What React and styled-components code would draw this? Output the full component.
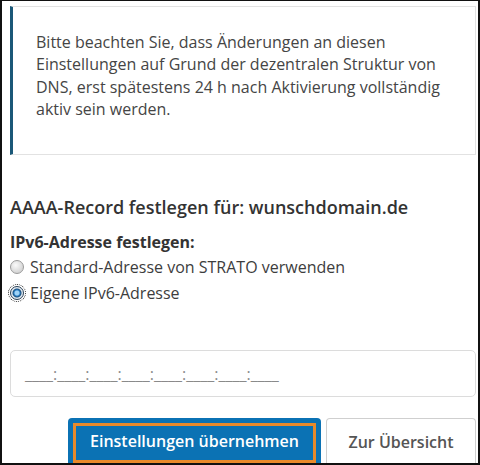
import { createGlobalStyle, styled } from "styled-components";

const GlobalStyle = createGlobalStyle`
  html, body {
    margin: 0;
    padding: 0;
    background: #fff;
  }
  body {
    font-family: "Open Sans", "Noto Sans", sans-serif;
    color: #3d3d3d;
  }
`;

const Frame = styled.div`
  box-sizing: border-box;
  width: 480px;
  height: 465px;
  border: 2px solid #111;
  border-top-width: 1px;
  padding: 5px 2px 0 8px;
  overflow: hidden;
  background: #fff;
`;

const Notice = styled.div`
  box-sizing: border-box;
  height: 149px;
  border: 1px solid #e2e2e2;
  border-left: 3px solid #1b5878;
  padding: 24px 20px 0 23px;
  font-size: 16px;
  line-height: 22.3px;
  color: #454545;
`;

const Section = styled.div`
  padding-top: 40px;
`;

const Heading = styled.h2`
  margin: 0;
  font-size: 18px;
  font-weight: 600;
  line-height: 24px;
  color: #333;
`;

const Label = styled.div`
  margin-top: 12px;
  font-size: 16px;
  font-weight: 700;
  line-height: 23px;
  color: #333;
`;

const RadioRow = styled.label`
  display: flex;
  align-items: center;
  gap: 6px;
  font-size: 16px;
  line-height: 26px;
  color: #3d3d3d;
`;

const RadioDot = styled.span`
  box-sizing: border-box;
  width: 14px;
  height: 14px;
  border-radius: 50%;
  border: 1px solid ${(p) => (p.$checked ? "#2a3f55" : "#9a9a9a")};
  background: ${(p) =>
    p.$checked
      ? "radial-gradient(circle at 50% 50%, #9fd3f7 0 2px, #2a7fc4 3px, #1b4f7d 4px, #dfe8f0 5px)"
      : "radial-gradient(circle at 40% 35%, #fafafa 0, #d6d6d6 70%)"};
  outline: ${(p) => (p.$checked ? "1px dotted #222" : "none")};
  outline-offset: 1px;
  flex-shrink: 0;
`;

const AddressField = styled.div`
  box-sizing: border-box;
  margin-top: 44px;
  height: 47px;
  border: 1px solid #dcdcdc;
  border-radius: 5px;
  padding: 12px 14px 0;
  font-size: 16px;
  color: #8a8a8a;
  white-space: nowrap;
`;

const Actions = styled.div`
  display: flex;
  justify-content: flex-end;
  gap: 5px;
  margin-top: 21px;
`;

const Button = styled.button`
  box-sizing: border-box;
  height: 50px;
  padding: 0 0 4px;
  font-family: "Open Sans", "Noto Sans", sans-serif;
  font-size: 16px;
  font-weight: 600;
  white-space: nowrap;
  border-radius: 4px 4px 0 0;
  cursor: pointer;
  ${(p) =>
    p.$primary
      ? `
    width: 253px;
    background: #0b72b4;
    color: #fff;
    border: none;
    outline: 3px solid #e98a2b;
    outline-offset: -8px;
  `
      : `
    width: 150px;
    background: #fff;
    color: #555;
    border: 1px solid #cfcfcf;
    border-bottom: none;
  `}
`;

export default function App() {
  return (
    <>
      <GlobalStyle />
      <Frame>
        <Notice>
          Bitte beachten Sie, dass Änderungen an diesen Einstellungen auf Grund
          der dezentralen Struktur von DNS, erst spätestens 24 h nach
          Aktivierung vollständig aktiv sein werden.
        </Notice>
        <Section>
          <Heading>AAAA-Record festlegen für: wunschdomain.de</Heading>
          <Label>IPv6-Adresse festlegen:</Label>
          <RadioRow>
            <RadioDot />
            Standard-Adresse von STRATO verwenden
          </RadioRow>
          <RadioRow>
            <RadioDot $checked />
            Eigene IPv6-Adresse
          </RadioRow>
          <AddressField>____:____:____:____:____:____:____:____</AddressField>
          <Actions>
            <Button $primary>Einstellungen übernehmen</Button>
            <Button>Zur Übersicht</Button>
          </Actions>
        </Section>
      </Frame>
    </>
  );
}
